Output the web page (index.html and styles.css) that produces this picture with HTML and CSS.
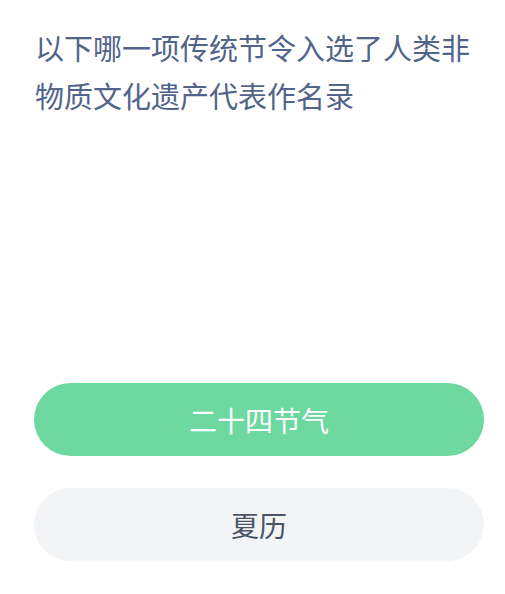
FILE: index.html
```html
<!DOCTYPE html>
<html lang="zh-CN">
<head>
    <meta charset="UTF-8">
    <meta name="viewport" content="width=device-width, initial-scale=1.0">
    <title>每日一题</title>
    <link rel="stylesheet" href="styles.css">
</head>
<body>
    <div class="quiz">
        <h2 class="question">以下哪一项传统节令入选了人类非物质文化遗产代表作名录</h2>
        <div class="options">
            <button class="option correct">二十四节气</button>
            <button class="option">夏历</button>
        </div>
    </div>
</body>
</html>
```

FILE: styles.css
```css
body {
    margin: 0;
    background: #fff;
    font-family: "Noto Sans CJK SC", "Noto Sans", sans-serif;
}
.quiz {
    padding: 23px 21px 0 35px;
}
.question {
    margin: 0;
    font-size: 29px;
    font-weight: 400;
    line-height: 48px;
    color: #52648a;
}
.options {
    display: flex;
    flex-direction: column;
    gap: 32px;
    margin-top: 264px;
    margin-left: -1px;
}
.option {
    width: 450px;
    height: 73px;
    border: none;
    border-radius: 37px;
    background: #f3f4f6;
    color: #485465;
    font-family: inherit;
    font-size: 28px;
    font-weight: 400;
    padding: 0;
}
.option.correct {
    background: #6dd89f;
    color: #fff;
}
```
